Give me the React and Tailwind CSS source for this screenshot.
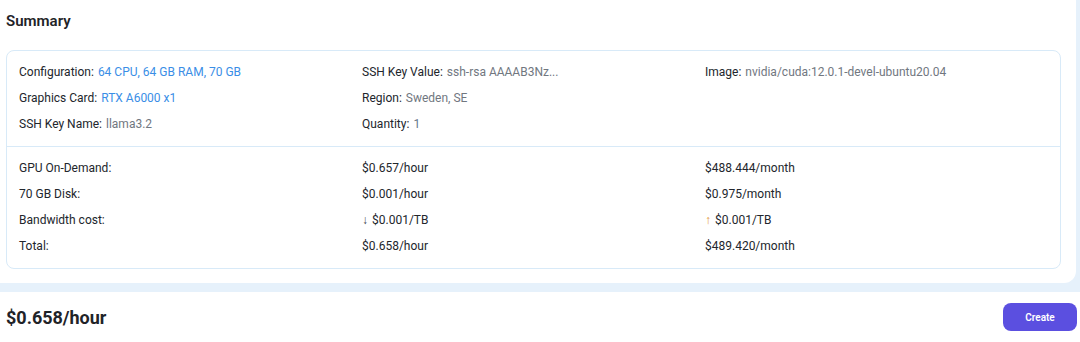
const details = [
  [
    { label: "Configuration:", value: "64 CPU, 64 GB RAM, 70 GB", tone: "blue" },
    { label: "SSH Key Value:", value: "ssh-rsa AAAAB3Nz...", tone: "gray" },
    { label: "Image:", value: "nvidia/cuda:12.0.1-devel-ubuntu20.04", tone: "gray" },
  ],
  [
    { label: "Graphics Card:", value: "RTX A6000 x1", tone: "blue" },
    { label: "Region:", value: "Sweden, SE", tone: "gray" },
    null,
  ],
  [
    { label: "SSH Key Name:", value: "llama3.2", tone: "gray" },
    { label: "Quantity:", value: "1", tone: "slate" },
    null,
  ],
];

const costs = [
  { name: "GPU On-Demand:", hour: "$0.657/hour", month: "$488.444/month" },
  { name: "70 GB Disk:", hour: "$0.001/hour", month: "$0.975/month" },
  { name: "Bandwidth cost:", hour: "$0.001/TB", month: "$0.001/TB", arrows: true },
  { name: "Total:", hour: "$0.658/hour", month: "$489.420/month" },
];

const toneClass = {
  blue: "text-[#3a8ee6]",
  gray: "text-[#71777f]",
  slate: "text-[#667889]",
};

function DetailCell({ item }) {
  if (!item) return <div />;
  return (
    <div className="h-[26px] flex items-center whitespace-nowrap">
      <span className="text-[#22262c]">{item.label}</span>
      <span className={`ml-1 ${toneClass[item.tone]}`}>{item.value}</span>
    </div>
  );
}

export default function App() {
  return (
    <div className="w-[1080px] h-[342px] overflow-hidden bg-[#e6f1fb] font-['Roboto',sans-serif] text-[12px]">
      {/* Summary panel */}
      <div className="mr-[4px] h-[283px] bg-white rounded-br-xl pl-[6px] pr-[15px] pt-[11px]">
        <h2 className="text-[15px] font-semibold text-[#1f2328] leading-[20px]">Summary</h2>

        <div className="mt-[19px] border border-[#d8eaf8] rounded-lg">
          <div className="px-[12px] pt-[8px] pb-[9px]">
            {details.map((row, i) => (
              <div key={i} className="grid grid-cols-3">
                {row.map((item, j) => (
                  <DetailCell key={j} item={item} />
                ))}
              </div>
            ))}
          </div>

          <div className="border-t border-[#d8eaf8] px-[12px] pt-[8px] pb-[9px]">
            {costs.map((c) => (
              <div key={c.name} className="grid grid-cols-3 h-[26px] items-center text-[#22262c] whitespace-nowrap">
                <span>{c.name}</span>
                <span>
                  {c.arrows && <span className="text-[#3f4650] mr-1">↓</span>}
                  {c.hour}
                </span>
                <span>
                  {c.arrows && <span className="text-[#e2963a] mr-1">↑</span>}
                  {c.month}
                </span>
              </div>
            ))}
          </div>
        </div>
      </div>

      {/* Footer */}
      <div className="mt-[9px] h-[50px] bg-white flex items-center justify-between pl-[6px] pr-[3px]">
        <span className="text-[18px] font-bold text-[#1f2328]">$0.658/hour</span>
        <button className="w-[74px] h-[28px] rounded-lg bg-[#5b4fe0] text-white text-[10px] font-semibold">
          Create
        </button>
      </div>
    </div>
  );
}
